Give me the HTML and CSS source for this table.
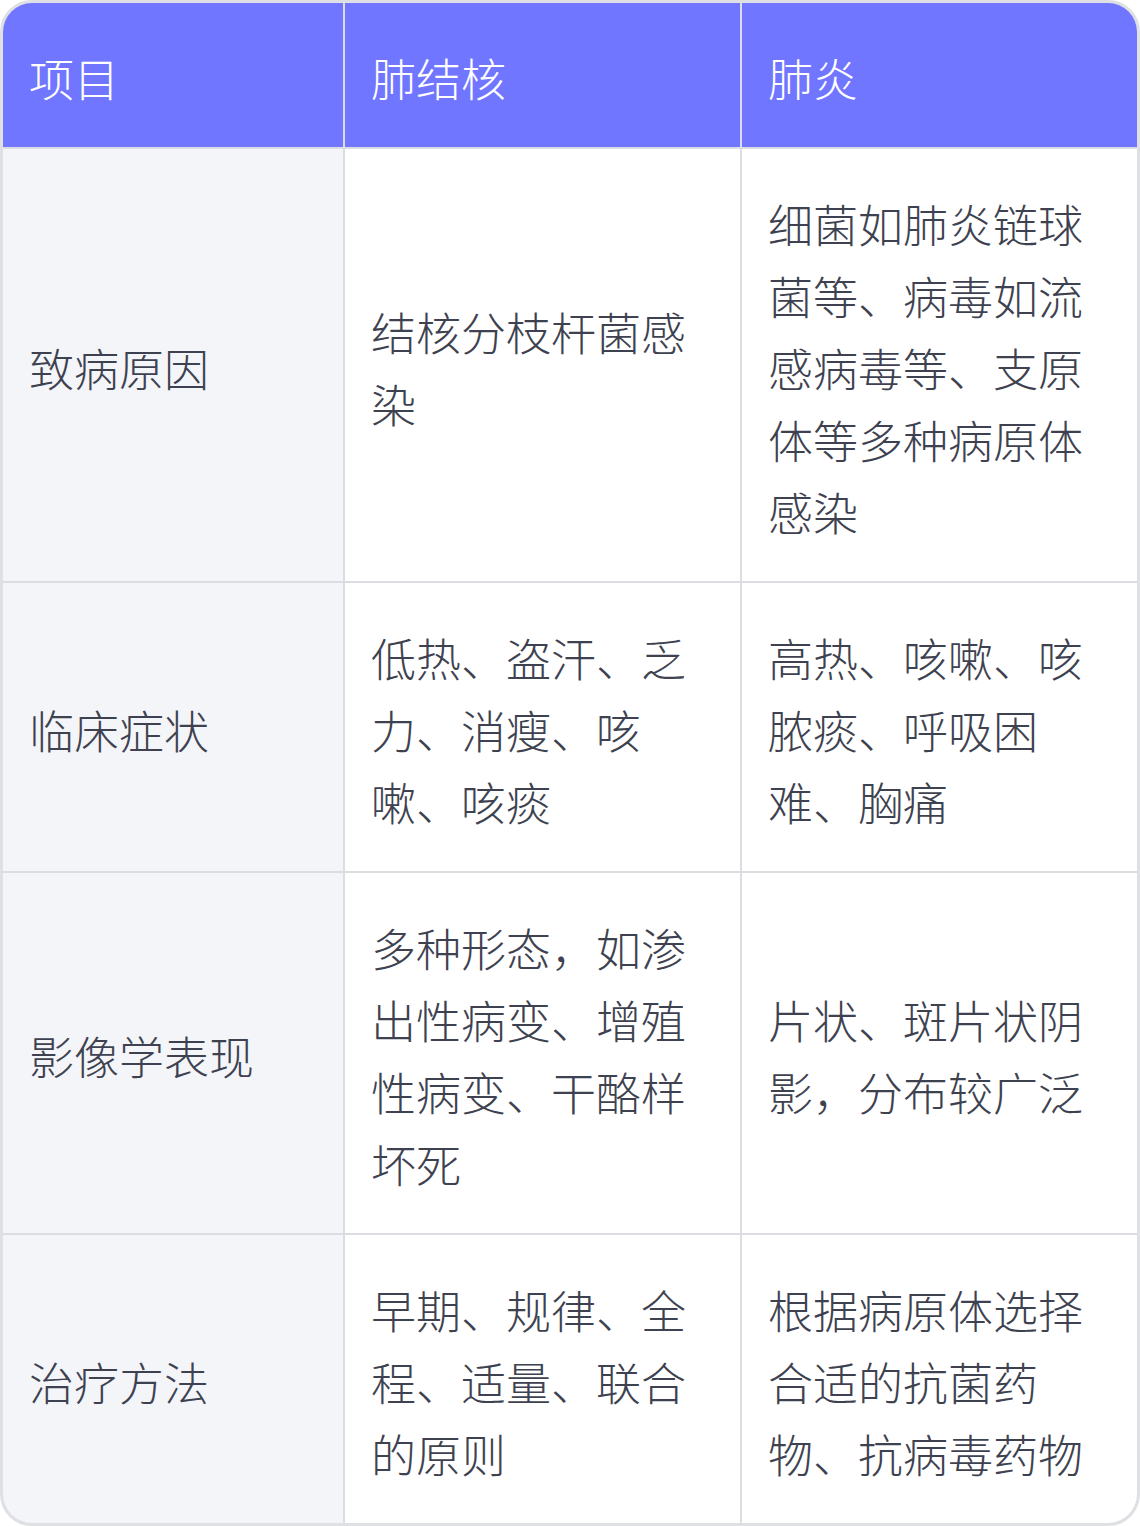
FILE: index.html
```html
<!DOCTYPE html>
<html lang="zh-CN">
<head>
<meta charset="utf-8">
<title>肺结核与肺炎对比</title>
<link rel="stylesheet" href="styles.css">
</head>
<body>
<div class="table">
  <div class="cell head">项目</div>
  <div class="cell head">肺结核</div>
  <div class="cell head">肺炎</div>

  <div class="cell label">致病原因</div>
  <div class="cell">结核分枝杆菌感染</div>
  <div class="cell">细菌如肺炎链球菌等、病毒如流感病毒等、支原体等多种病原体感染</div>

  <div class="cell label">临床症状</div>
  <div class="cell">低热、盗汗、乏力、消瘦、咳嗽、咳痰</div>
  <div class="cell">高热、咳嗽、咳脓痰、呼吸困难、胸痛</div>

  <div class="cell label">影像学表现</div>
  <div class="cell">多种形态，如渗出性病变、增殖性病变、干酪样坏死</div>
  <div class="cell">片状、斑片状阴影，分布较广泛</div>

  <div class="cell label">治疗方法</div>
  <div class="cell">早期、规律、全程、适量、联合的原则</div>
  <div class="cell">根据病原体选择合适的抗菌药物、抗病毒药物</div>
</div>
</body>
</html>
```
FILE: styles.css
```css
html, body {
  margin: 0;
  padding: 0;
  background: #ffffff;
}
.table {
  width: 1140px;
  height: 1526px;
  box-sizing: border-box;
  display: grid;
  grid-template-columns: 340px 395px 395px;
  grid-auto-rows: auto;
  gap: 2px;
  background: #dcdde2;
  border: 3px solid #dfe0e4;
  border-radius: 32px;
  overflow: hidden;
  font-family: "Noto Sans CJK SC", "Noto Sans", sans-serif;
  font-weight: 300;
  font-size: 45px;
  line-height: 72px;
  color: #3e4250;
}
.cell {
  background: #ffffff;
  padding: 39px 26px 33px 26px;
  display: flex;
  align-items: center;
  word-break: break-all;
}
.head {
  background: #7076ff;
  color: #ffffff;
}
.label {
  background: #f4f5f9;
}
```
